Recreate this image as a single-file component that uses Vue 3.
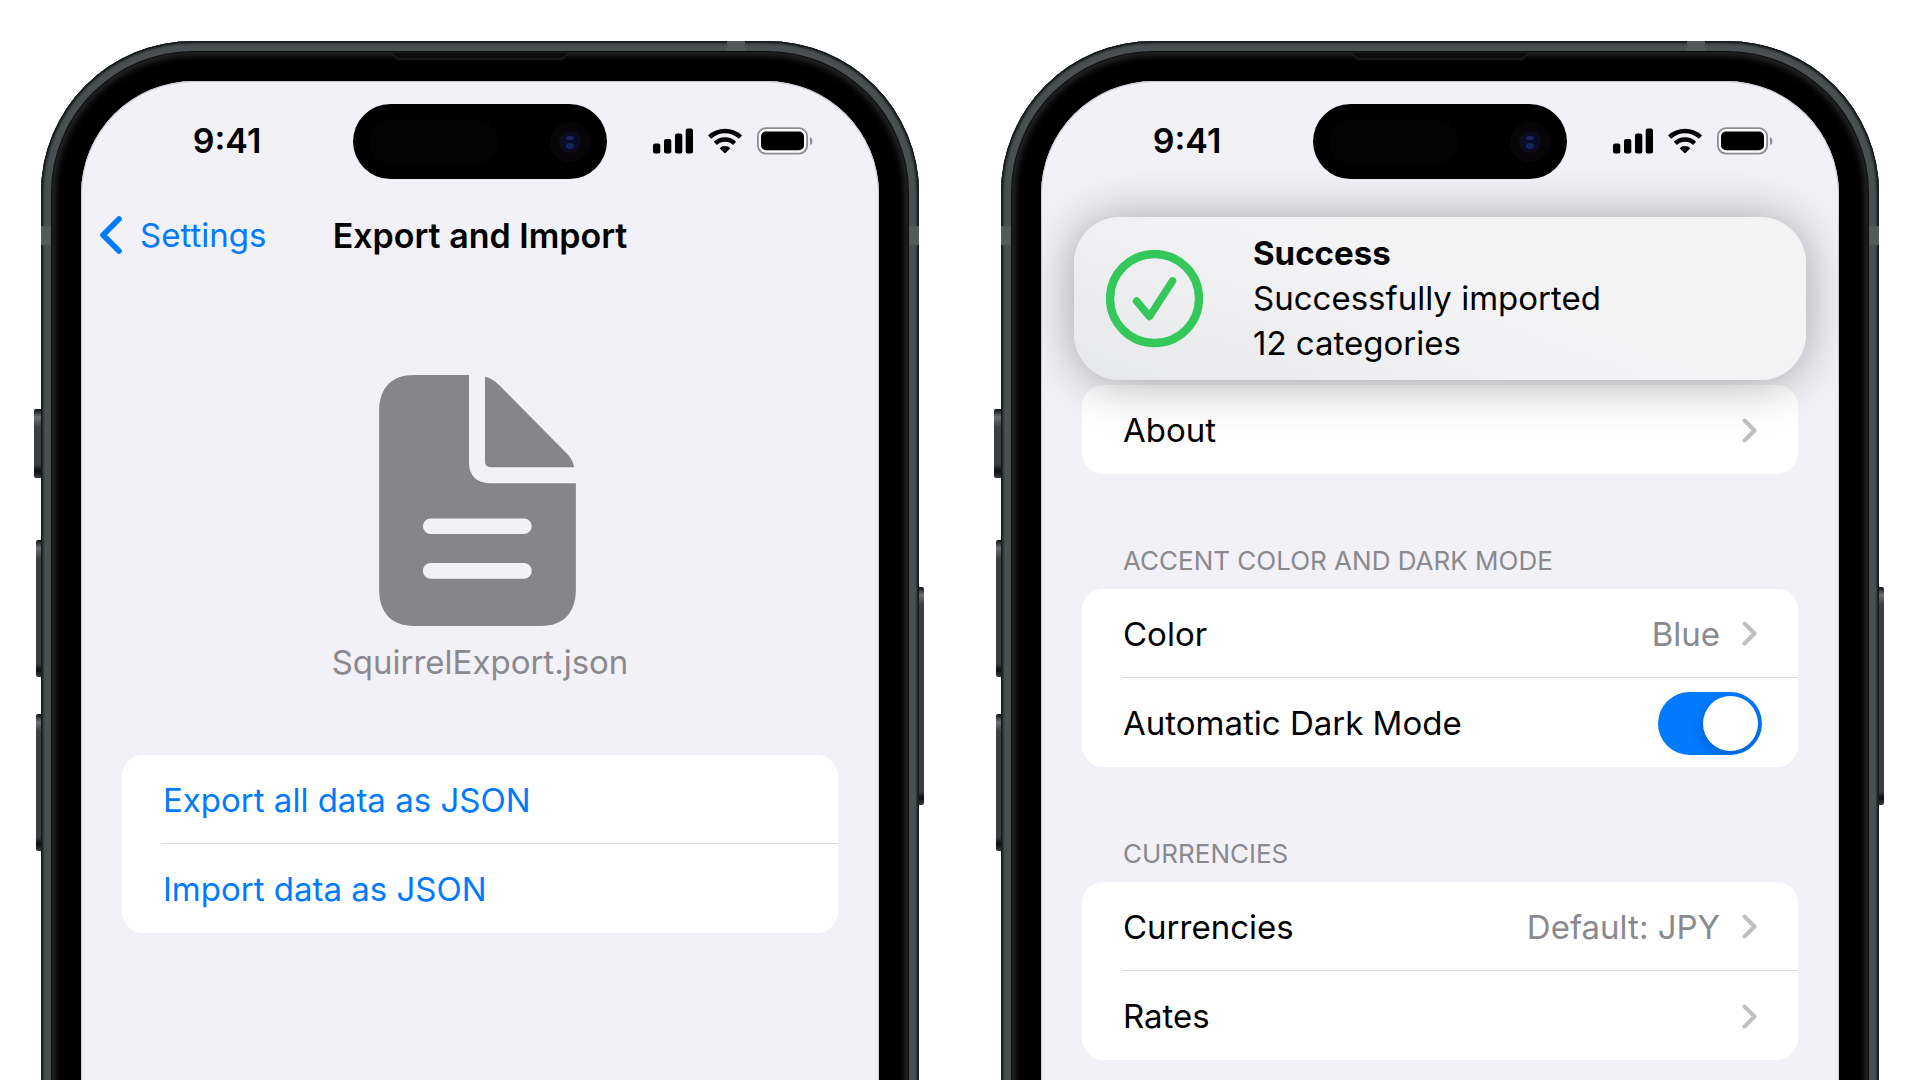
<script setup>
import { reactive } from 'vue'

const phones = ['transfer', 'settings']

const transferActions = ['Export all data as JSON', 'Import data as JSON']

const sections = reactive([
  {
    title: '',
    rows: [{ label: 'About' }],
  },
  {
    title: 'Accent color and dark mode',
    rows: [
      { label: 'Color', value: 'Blue' },
      { label: 'Automatic Dark Mode', toggle: true, on: true },
    ],
  },
  {
    title: 'Currencies',
    rows: [{ label: 'Currencies', value: 'Default: JPY' }, { label: 'Rates' }],
  },
])
</script>

<template>
  <main class="stage">
    <div v-for="phone in phones" :key="phone" class="phone">
      <span class="key key-action"></span>
      <span class="key key-up"></span>
      <span class="key key-down"></span>
      <span class="key key-power"></span>
      <span class="band band-left"></span>
      <span class="band band-right"></span>
      <span class="band band-top"></span>

      <div class="bezel">
        <svg class="earpiece" width="176" height="7" viewBox="0 0 176 7" aria-hidden="true">
          <path d="M0 0 L4 5 Q5 6 7 6 H169 Q171 6 172 5 L176 0Z" fill="#0c0c0c" />
          <path d="M1 1 L4 5 Q5 6 7 6 H169 Q171 6 172 5 L175 1" fill="none" stroke="#2b2b2b" />
        </svg>

        <div class="screen">
          <header class="status">
            <time class="clock">9:41</time>
            <div class="island">
              <span class="sensor"></span>
              <svg class="lens" width="42" height="42" viewBox="0 0 42 42" aria-hidden="true">
                <circle cx="21" cy="21" r="20" fill="#080509" />
                <circle cx="21" cy="21" r="11" fill="#0b0d1c" />
                <circle cx="21" cy="21" r="8" fill="#090b2c" />
                <ellipse cx="21" cy="17" rx="4" ry="2" fill="#23265e" />
                <ellipse cx="21" cy="25" rx="4" ry="3" fill="#0c2f55" />
                <circle cx="21" cy="26" r="2" fill="#2b1a6b" />
              </svg>
            </div>
            <div class="indicators">
              <svg width="40" height="26" viewBox="0 0 40 26" aria-hidden="true">
                <rect x="0" y="15.500" width="7.300" height="10" rx="2" />
                <rect x="11" y="11" width="7.300" height="14.500" rx="2" />
                <rect x="22" y="5.500" width="7.300" height="20" rx="2" />
                <rect x="32.700" y="0.500" width="7.300" height="25" rx="2" />
              </svg>
              <svg width="34" height="26" viewBox="0 0 34 26" aria-hidden="true">
                <g fill="none" stroke="#000" stroke-width="4.600">
                  <path d="M1.500 9.200 A22.500 22.500 0 0 1 32.500 9.200" />
                  <path d="M7.400 15.300 A14 14 0 0 1 26.600 15.300" />
                </g>
                <path d="M17 25.500 L11.600 20.200 A7.700 7.700 0 0 1 22.400 20.200Z" />
              </svg>
              <svg width="56" height="28" viewBox="0 0 56 28" aria-hidden="true">
                <rect x="0.900" y="1.200" width="49.200" height="25.400" rx="8" fill="#fafafc" stroke="#8e8d92" stroke-width="1.800" />
                <rect x="4" y="4.500" width="43" height="18.800" rx="5" />
                <path d="M53 10 Q55.500 11 55.500 13.900 Q55.500 17 53 18Z" fill="#8e8d92" />
              </svg>
            </div>
          </header>

          <template v-if="phone === 'transfer'">
            <nav class="navbar">
              <a class="back" href="#settings">
                <svg width="24" height="40" viewBox="0 0 24 40" aria-hidden="true">
                  <path d="M20 4 L4 20 L20 36" fill="none" stroke="#007aff" stroke-width="5.600" stroke-linecap="round" stroke-linejoin="round" />
                </svg>
                <span>Settings</span>
              </a>
              <h1 class="title">Export and Import</h1>
            </nav>

            <figure class="file">
              <svg width="197" height="251" viewBox="117 74 591 754" aria-hidden="true">
                <path
                  fill="#86858a"
                  fill-rule="evenodd"
                  d="M222 74 H387 V338 Q389 397 450 399 H708 V723 C706 790 670 828 603 828 H222 C155 828 119 790 117 723 V179 C119 112 155 74 222 74Z
                     M272 505 H552 A23.500 23.500 0 0 1 552 552 H272 A23.500 23.500 0 0 1 272 505Z
                     M272 639 H552 A23.500 23.500 0 0 1 552 686 H272 A23.500 23.500 0 0 1 272 639Z"
                />
                <path fill="#86858a" d="M435 79 C450 82 463 90 478 105 L683 312 C694 324 700 336 703 351 H452 Q435 351 435 334Z" />
              </svg>
              <figcaption>SquirrelExport.json</figcaption>
            </figure>

            <ul class="card">
              <li v-for="action in transferActions" :key="action" class="item">
                <button type="button" class="row action">{{ action }}</button>
              </li>
            </ul>
          </template>

          <template v-else>
            <div class="banner" role="status">
              <svg width="98" height="98" viewBox="0 0 98 98" aria-hidden="true">
                <g fill="none" stroke="#34c759" stroke-linecap="round" stroke-linejoin="round">
                  <circle cx="48.500" cy="48.500" r="44.500" stroke-width="8.300" />
                  <path d="M30.500 51 L43.500 66.500 L66.500 31" stroke-width="7.500" />
                </g>
              </svg>
              <div class="message">
                <strong>Success</strong>
                <p>Successfully imported<br />12 categories</p>
              </div>
            </div>

            <section v-for="(section, i) in sections" :key="i" class="section">
              <h2 v-if="section.title" class="heading">{{ section.title }}</h2>
              <ul class="card">
                <li v-for="row in section.rows" :key="row.label" class="item">
                  <label v-if="row.toggle" class="row row-toggle">
                    <span class="label">{{ row.label }}</span>
                    <input v-model="row.on" type="checkbox" role="switch" class="switch" />
                  </label>
                  <a v-else class="row" href="#">
                    <span class="label">{{ row.label }}</span>
                    <span v-if="row.value" class="value">{{ row.value }}</span>
                    <svg width="15" height="26" viewBox="0 0 15 26" aria-hidden="true">
                      <path d="M2.500 2.500 L12.500 12.500 L2.500 22.500" fill="none" stroke="#c0c0c2" stroke-width="4" stroke-linecap="round" stroke-linejoin="round" />
                    </svg>
                  </a>
                </li>
              </ul>
            </section>
          </template>
        </div>
      </div>
    </div>
  </main>
</template>

<style>
body {
  margin: 0;
  background: #fff;
}
</style>

<style scoped>
.stage {
  display: grid;
  grid-template-columns: repeat(2, minmax(0, 1fr));
  column-gap: 82px;
  box-sizing: border-box;
  min-height: 100vh;
  padding: 41px 41px 0;
  overflow: hidden;
  font-family: Inter, sans-serif;
  font-size: 33px;
  line-height: 45px;
  color: #000;
}

/* The handset runs on past the lower edge of the page. */
.phone {
  position: relative;
  display: flex;
  box-sizing: border-box;
  margin-bottom: -20px;
  padding: 11px 11px 0;
  border-radius: 152px 152px 0 0;
  background: #4a4f51;
  box-shadow:
    inset 0 0 0 1px #15191a,
    inset 0 0 2px 2px #1d2223,
    inset 0 0 3px 2px #33393b;
}

.bezel {
  position: relative;
  display: flex;
  flex: 1;
  min-width: 0;
  padding: 29px 29px 0;
  border-radius: 141px 141px 0 0;
  background: #000;
  box-shadow:
    0 0 0 1px #0c0e0e,
    inset 0 0 0 1px #1c1c1c,
    inset 0 0 7px 3px #2c2c2c;
}

.screen {
  display: flex;
  flex: 1;
  flex-direction: column;
  min-width: 0;
  padding-bottom: 20px;
  overflow: hidden;
  border-radius: 113px 113px 0 0;
  background: #f2f1f7;
  box-shadow: inset 0 0 0 1px #c9c8cd;
}

.key {
  position: absolute;
  right: 100%;
  width: 5px;
  height: 137px;
  border-radius: 2px 0 0 2px;
  background: linear-gradient(#0c0e0e, #6b7072 8px, #3a4041 18px, #3a4041 calc(100% - 14px), #0c0e0e calc(100% - 7px), #3a3d3e);
}

.key-action {
  top: 368px;
  width: 7px;
  height: 69px;
}

.key-up {
  top: 499px;
}

.key-down {
  top: 673px;
}

.key-power {
  top: 546px;
  right: auto;
  left: 100%;
  height: 218px;
  border-radius: 0 2px 2px 0;
}

.band {
  position: absolute;
  top: 185px;
  width: 11px;
  height: 19px;
  background: #54595a;
}

.band-left {
  left: 0;
}

.band-right {
  right: 0;
}

.band-top {
  top: 0;
  right: 174px;
  width: 18px;
  height: 11px;
}

.earpiece {
  position: absolute;
  top: 1px;
  left: 50%;
  margin-left: -88px;
}

.status {
  display: grid;
  grid-template-columns: 1fr 254px 1fr;
  align-items: center;
  padding: 23px 20px 0;
}

.clock {
  justify-self: center;
  padding-bottom: 2px;
  font-size: 34px;
  font-weight: 600;
}

.island {
  display: flex;
  align-items: center;
  justify-content: space-between;
  box-sizing: border-box;
  height: 75px;
  padding: 0 16px;
  border-radius: 38px;
  background: #000;
}

.sensor {
  width: 130px;
  height: 44px;
  border-radius: 22px;
  background: #030303;
}

.indicators {
  display: flex;
  align-items: center;
  justify-self: center;
  gap: 15px;
  padding-bottom: 2px;
}

.navbar {
  display: grid;
  grid-template-columns: 1fr auto 1fr;
  align-items: center;
  height: 112px;
  padding: 0 18px;
}

.back {
  display: flex;
  align-items: center;
  gap: 17px;
  color: #007aff;
  text-decoration: none;
}

.title {
  margin: 0;
  font-size: 34px;
  font-weight: 600;
}

.file {
  display: flex;
  flex-direction: column;
  align-items: center;
  gap: 14px;
  margin: 84px 0 70px;
  color: #8a898e;
}

.file svg {
  margin-right: 6px;
}

.card {
  margin: 0 41px;
  padding: 0;
  overflow: hidden;
  border-radius: 21px;
  background: #fff;
  list-style: none;
}

.item {
  padding-left: 40px;
}

.row {
  display: flex;
  align-items: center;
  box-sizing: border-box;
  width: 100%;
  height: 89px;
  padding: 2px 41px 0 1px;
  border: 0;
  background: none;
  color: #000;
  font: inherit;
  text-align: left;
  text-decoration: none;
}

.item:not(:last-child) .row {
  border-bottom: 1px solid #dcdcde;
}

.action {
  color: #007aff;
}

.row-toggle {
  padding-right: 36px;
}

.label {
  flex: 1;
}

.value {
  margin-right: 22px;
  color: #8a898e;
}

.switch {
  box-sizing: border-box;
  width: 104px;
  height: 63px;
  margin: 0;
  padding: 4px;
  overflow: hidden;
  border-radius: 32px;
  appearance: none;
  background: #e9e9ea;
}

.switch::before {
  display: block;
  width: 55px;
  height: 55px;
  border-radius: 50%;
  background: #fff;
  box-shadow: 0 5px 14px rgba(0, 0, 0, 0.2);
  content: '';
}

.switch:checked {
  background: #007aff;
}

.switch:checked::before {
  margin-left: auto;
}

.banner {
  position: relative;
  z-index: 1;
  display: flex;
  align-items: center;
  gap: 49px;
  box-sizing: border-box;
  margin: 38px 33px 5px;
  padding: 14px 32px;
  border-radius: 46px;
  background: linear-gradient(20deg, #e7e8e9, #f3f3f5 50%, #f3f3f4);
  box-shadow: 0 2px 50px rgba(0, 0, 0, 0.34);
}

.message strong {
  display: block;
  font-weight: 700;
}

.message p {
  margin: 0;
}

.heading {
  box-sizing: border-box;
  height: 115px;
  margin: 0 82px;
  padding-top: 71px;
  color: #8a898e;
  font-size: 26px;
  font-weight: 400;
  line-height: 32px;
  text-transform: uppercase;
}
</style>
